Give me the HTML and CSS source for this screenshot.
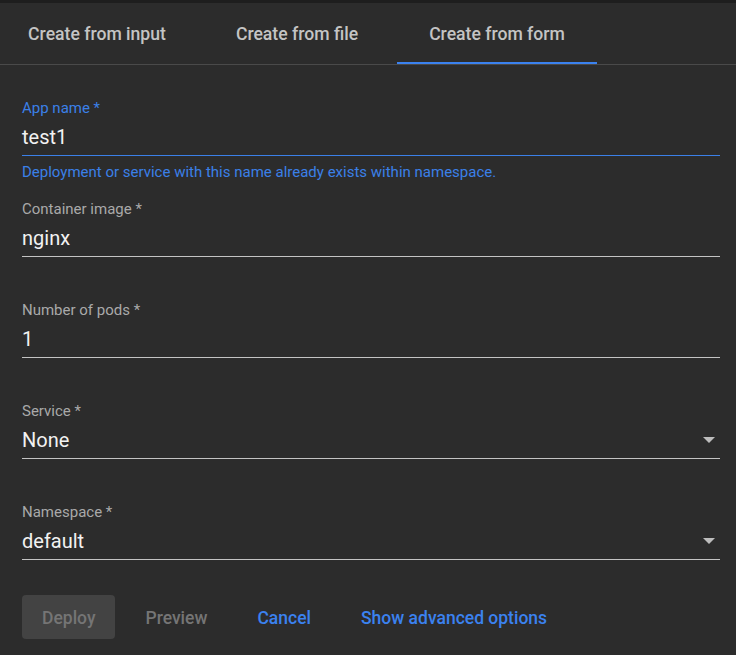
FILE: index.html
```html
<!DOCTYPE html>
<html>
<head>
<meta charset="utf-8">
<link rel="stylesheet" href="styles.css">
</head>
<body>
<div class="app">
  <div class="topstrip"></div>
  <nav class="tabs">
    <div class="tab">Create from input</div>
    <div class="tab">Create from file</div>
    <div class="tab active">Create from form</div>
  </nav>
  <form class="form">
    <div class="field invalid">
      <label class="label">App name *</label>
      <div class="control"><span class="value">test1</span></div>
      <div class="sub"><span class="hint">Deployment or service with this name already exists within namespace.</span></div>
    </div>
    <div class="field">
      <label class="label">Container image *</label>
      <div class="control"><span class="value">nginx</span></div>
      <div class="sub"></div>
    </div>
    <div class="field">
      <label class="label">Number of pods *</label>
      <div class="control"><span class="value">1</span></div>
      <div class="sub"></div>
    </div>
    <div class="field">
      <label class="label">Service *</label>
      <div class="control select"><span class="value">None</span><span class="arrow"></span></div>
      <div class="sub"></div>
    </div>
    <div class="field last">
      <label class="label">Namespace *</label>
      <div class="control select"><span class="value">default</span><span class="arrow"></span></div>
      <div class="sub"></div>
    </div>
    <div class="actions">
      <button type="button" class="btn raised" disabled>Deploy</button>
      <button type="button" class="btn muted">Preview</button>
      <button type="button" class="btn link">Cancel</button>
      <button type="button" class="btn link">Show advanced options</button>
    </div>
  </form>
</div>
</body>
</html>
```

FILE: styles.css
```css
* { box-sizing: border-box; }
html, body {
  margin: 0;
  padding: 0;
  background: #2c2c2c;
  font-family: Roboto, "Liberation Sans", sans-serif;
}
.app {
  width: 736px;
  height: 655px;
  background: #2c2c2c;
  overflow: hidden;
}
.topstrip {
  height: 3px;
  background: #1e1e1e;
}
.tabs {
  display: flex;
  height: 62px;
  border-bottom: 1px solid #4a4a4a;
  margin-left: -3px;
}
.tab {
  width: 200px;
  display: flex;
  align-items: center;
  justify-content: center;
  font-size: 17.6px;
  font-weight: 500;
  color: #c4c4c4;
  padding-top: 3px;
  padding-bottom: 2px;
}
.tab.active {
  border-bottom: 2px solid #3b82f0;
  padding-bottom: 0;
}
.form {
  padding: 35px 16px 0 22px;
}
.field {
  display: flex;
  flex-direction: column;
}
.label {
  font-size: 15px;
  line-height: 16px;
  height: 16px;
  color: #a9a9a9;
  white-space: nowrap;
}
.control {
  display: flex;
  align-items: center;
  height: 40px;
  padding-top: 8px;
  padding-bottom: 6px;
  border-bottom: 1px solid #c4c4c4;
}
.value {
  flex: 1;
  font-size: 20px;
  line-height: 26px;
  color: #f2f2f2;
}
.arrow {
  width: 0;
  height: 0;
  border-left: 6px solid transparent;
  border-right: 6px solid transparent;
  border-top: 6px solid #bdbdbd;
  margin-right: 5px;
}
.sub {
  height: 45px;
  padding-top: 8px;
}
.field.last .sub {
  height: 35px;
}
.hint {
  display: block;
  font-size: 15px;
  line-height: 16px;
  color: #3b80e8;
  white-space: nowrap;
}
.invalid .label { color: #3b80e8; }
.invalid .control { border-bottom-color: #3b80e8; }
.actions {
  display: flex;
  gap: 10px;
}
.btn {
  height: 44px;
  padding: 0 20px;
  border: none;
  border-radius: 4px;
  background: transparent;
  font-family: Roboto, "Liberation Sans", sans-serif;
  font-size: 17.5px;
  font-weight: 500;
  line-height: 46px;
}
.btn.raised {
  background: #434343;
  color: #757575;
}
.btn.muted { color: #757575; }
.btn.link { color: #3b82f0; }
```
